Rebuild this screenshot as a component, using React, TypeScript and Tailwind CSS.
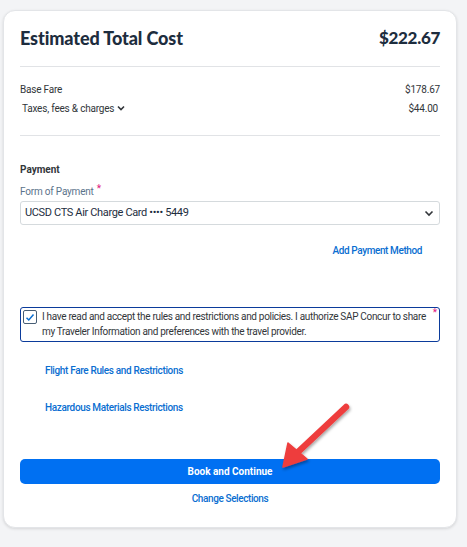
import React from "react";

export default function App() {
  return (
    <div className="w-[467px] h-[547px] bg-[#f3f4f6] pt-[10px] pl-[3px] relative overflow-hidden" style={{ fontFamily: 'Roboto, "Noto Sans", sans-serif' }}>
      <div className="w-[454px] h-[518px] bg-white rounded-[12px] border border-[#e3e5e8] shadow-[0_1px_3px_rgba(0,0,0,0.12)] px-[16px]">
        <div className="flex justify-between items-center h-[54px]">
          <div className="text-[18px] font-black text-[#1d2d3e] tracking-[-0.1px]" style={{ fontFamily: 'Lato, sans-serif' }}>Estimated Total Cost</div>
          <div className="text-[17px] font-black text-[#1d2d3e] tracking-[-0.3px]" style={{ fontFamily: 'Lato, sans-serif' }}>$222.67</div>
        </div>
        <div className="border-t border-[#e1e3e6] mt-[1px]" />
        <div className="pt-[13px] text-[10px] text-[#32363a] tracking-[-0.2px]">
          <div className="flex justify-between h-[18px] items-center">
            <span>Base Fare</span>
            <span>$178.67</span>
          </div>
          <div className="flex justify-between h-[20px] items-center">
            <span className="pl-[2px] flex items-center gap-[3px]">Taxes, fees &amp; charges
              <svg width="8" height="6" viewBox="0 0 8 6"><path d="M1 1.5 L4 4.5 L7 1.5" fill="none" stroke="#32363a" strokeWidth="1.6" /></svg>
            </span>
            <span className="pr-[2px]">$44.00</span>
          </div>
        </div>
        <div className="border-t border-[#e1e3e6] mt-[17px]" />
        <div className="pt-[27px] text-[10px] leading-[14px] font-bold text-[#32363a]">Payment</div>
        <div className="mt-[8px] text-[10px] leading-[14px] text-[#5b738b] flex tracking-[-0.2px]">Form of Payment<span className="text-[#e0137d] ml-[3px] -mt-[3px]">*</span></div>
        <div className="mt-[2px] h-[24px] border border-[#d5dadd] rounded-[3px] flex items-center justify-between pl-[4px] pr-[5px]">
          <span className="text-[11px] text-[#1d2d3e] tracking-[-0.35px]">UCSD CTS Air Charge Card •••• 5449</span>
          <svg width="10" height="7" viewBox="0 0 10 7"><path d="M1.5 1.5 L5 5 L8.5 1.5" fill="none" stroke="#32363a" strokeWidth="1.6" /></svg>
        </div>
        <div className="flex justify-end pr-[18px] mt-[19px]">
          <span className="text-[10px] leading-[14px] font-medium text-[#0a6ed1] tracking-[-0.4px]">Add Payment Method</span>
        </div>
        <div className="mt-[49px] border border-[#0b3b9b] rounded-[3px] h-[35px] flex relative pl-[2px] pt-[1px]">
          <div className="w-[14px] h-[14px] border border-[#475e75] rounded-[2px] flex items-center justify-center mt-[1px] shrink-0">
            <svg width="10" height="9" viewBox="0 0 10 9"><path d="M1.5 4.8 L3.8 7 L8.5 1.5" fill="none" stroke="#0a6ed1" strokeWidth="1.5" /></svg>
          </div>
          <div className="ml-[5px] text-[10px] leading-[15px] text-[#32363a] whitespace-nowrap tracking-[-0.32px]">I have read and accept the rules and restrictions and policies. I authorize SAP Concur to share<br />my Traveler Information and preferences with the travel provider.</div>
          <span className="absolute right-[2px] top-[-1px] text-[10px] leading-[12px] text-[#e0137d]">*</span>
        </div>
        <div className="pl-[25px] mt-[22px] text-[10px] leading-[14px] font-medium text-[#0a6ed1] tracking-[-0.35px]">Flight Fare Rules and Restrictions</div>
        <div className="pl-[25px] mt-[23px] text-[10px] leading-[14px] font-medium text-[#0a6ed1] tracking-[-0.35px]">Hazardous Materials Restrictions</div>
        <div className="mt-[44px] h-[25px] bg-[#0070f2] rounded-[5px] flex items-center justify-center text-white text-[10px] font-bold">Book and Continue</div>
        <div className="mt-[8px] text-center text-[10px] leading-[14px] font-medium text-[#0a6ed1] tracking-[-0.4px]">Change Selections</div>
      </div>
      <svg className="absolute left-0 top-0 pointer-events-none" width="467" height="547">
        <defs>
          <filter id="sh" x="-20%" y="-20%" width="140%" height="140%">
            <feDropShadow dx="1" dy="2" stdDeviation="1.5" floodColor="#000" floodOpacity="0.35" />
          </filter>
        </defs>
        <g filter="url(#sh)">
          <line x1="346" y1="407" x2="298" y2="452" stroke="#ee3e3e" strokeWidth="6.5" strokeLinecap="round" />
          <polygon points="283,467 288,443 307,459" fill="#ee3e3e" stroke="#ee3e3e" strokeWidth="1.5" strokeLinejoin="round" />
        </g>
      </svg>
    </div>
  );
}
